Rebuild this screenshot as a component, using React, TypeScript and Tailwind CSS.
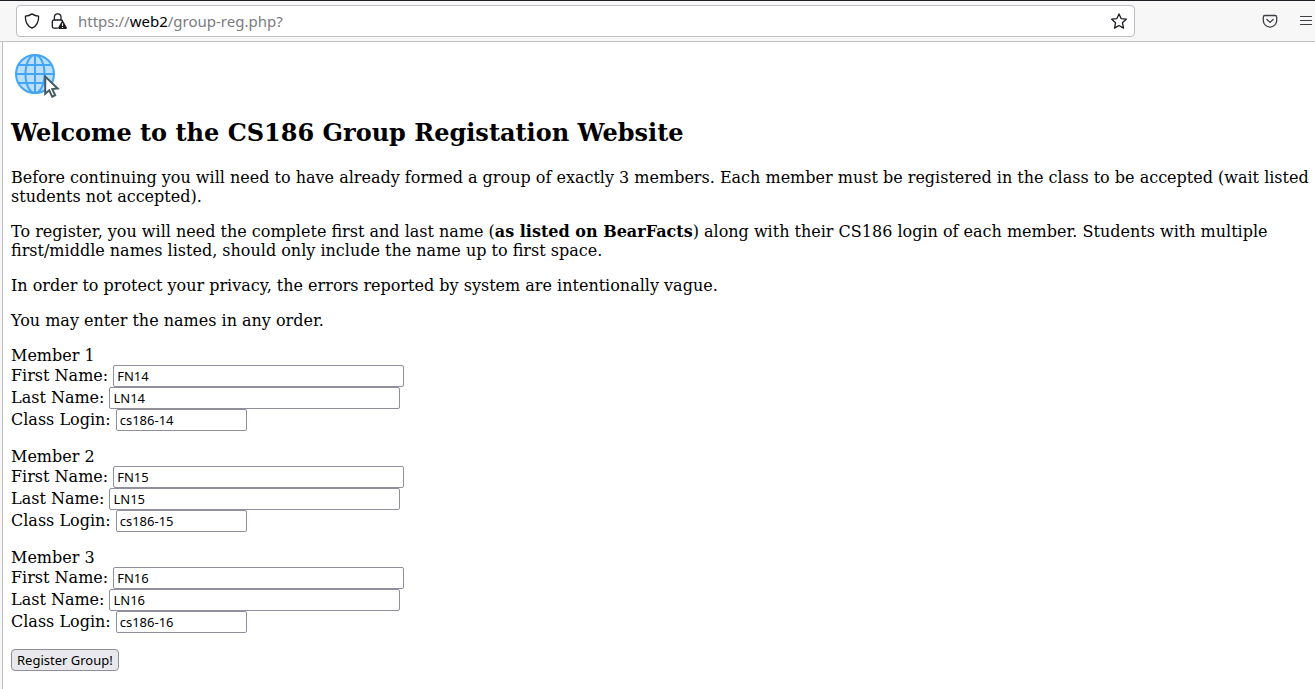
import React from "react";

type Member = { id: number; first: string; last: string; login: string };

const members: Member[] = [
  { id: 1, first: "FN14", last: "LN14", login: "cs186-14" },
  { id: 2, first: "FN15", last: "LN15", login: "cs186-15" },
  { id: 3, first: "FN16", last: "LN16", login: "cs186-16" },
];

function ShieldIcon() {
  return (
    <svg width="16" height="16" viewBox="0 0 16 16" fill="none" stroke="#1c1b22" strokeWidth="1.3" strokeLinejoin="round">
      <path d="M8 .9c2.100 1.500 4.400 2.100 6.600 2.300.2 4.900-1.600 9.600-6.600 12C3 12.800 1.200 8.100 1.400 3.200 3.600 3 5.900 2.400 8 .9z" />
    </svg>
  );
}

function LockWarningIcon() {
  return (
    <svg width="16" height="16" viewBox="0 0 16 16" fill="none">
      <path
        d="M6.500 15.200H3a1.700 1.700 0 0 1-1.700-1.700V8.700A1.700 1.700 0 0 1 3 7h7.100M3.400 7V4.200a3.300 3.300 0 0 1 6.600 0V7c.8 0 1.300.4 1.500 1"
        stroke="#1c1b22"
        strokeWidth="1.300"
        strokeLinecap="round"
      />
      <path d="M10.700 8.300a.9.900 0 0 1 1.600 0l3.500 6.300c.3.600-.1 1.300-.8 1.300H8c-.7 0-1.100-.7-.8-1.300z" fill="#1c1b22" />
      <path d="M11.500 10.200v2.700M11.500 14v1" stroke="#fff" strokeWidth="1.100" />
    </svg>
  );
}

function StarIcon() {
  return (
    <svg width="16" height="16" viewBox="0 0 16 16" fill="none" stroke="#1c1b22" strokeWidth="1.300" strokeLinejoin="round">
      <path d="M8 .9l2.100 4.700 5.200.6-3.900 3.500 1.100 5.400L8 12.500l-4.500 2.600 1.100-5.400L.7 6.200l5.200-.6z" />
    </svg>
  );
}

function PocketIcon() {
  return (
    <svg width="16" height="16" viewBox="0 0 16 16" fill="none" stroke="#3f3f45" strokeWidth="1.300" strokeLinecap="round" strokeLinejoin="round">
      <path d="M3 2.500h10a1.700 1.700 0 0 1 1.700 1.700v3.200a6.700 6.700 0 0 1-13.400 0V4.200A1.700 1.700 0 0 1 3 2.500z" />
      <path d="M4.900 6.500L8 9.400l3.100-2.900" />
    </svg>
  );
}

function MenuIcon() {
  return (
    <svg width="16" height="16" viewBox="0 0 16 16" stroke="#3f3f45" strokeWidth="1.200" strokeLinecap="round">
      <path d="M2.500 3.500h11M2.500 7.500h11M2.500 11.500h11" />
    </svg>
  );
}

function GlobeLogo() {
  return (
    <svg width="50" height="50" viewBox="0 0 50 50" fill="none" role="img" aria-label="Website">
      <circle cx="24" cy="24" r="19" fill="#bbdefb" />
      <g stroke="#42a5f5" strokeWidth="2">
        <circle cx="24" cy="24" r="19" />
        <ellipse cx="24" cy="24" rx="9.500" ry="19" />
        <path d="M24 5v38M5 24h38M8 15h32M8 33h32" />
      </g>
      <path
        d="M34.200 26.500v17.300l4-3.500 3 6.400 3-1.400-2.900-6.200 5.400-.6z"
        fill="#fff"
        stroke="#455a64"
        strokeWidth="2"
        strokeLinejoin="miter"
      />
    </svg>
  );
}

type FieldProps = { id: string; label: string; value: string; short?: boolean };

function Field({ id, label, value, short = false }: FieldProps) {
  return (
    <div className="flex h-[22px] items-center gap-[5px]">
      <label htmlFor={id} className="leading-5">
        {label}
      </label>
      <input
        id={id}
        type="text"
        defaultValue={value}
        className={`h-[22px] rounded-xs border border-[#8f8f9d] bg-white px-[3px] font-['Noto_Sans','Open_Sans',sans-serif] text-[13px] text-black ${
          short ? "w-[131px]" : "w-[291px]"
        }`}
      />
    </div>
  );
}

export default function App() {
  return (
    <div className="flex min-h-screen flex-col bg-white text-black">
      <header className="flex h-[42px] items-center border-t border-b border-t-[#201d24] border-b-[#c2c2c4] bg-[#f7f7f7] pr-px pl-4">
        <div className="flex h-8 min-w-0 flex-1 items-center rounded-sm border border-[#bfbfc2] bg-white px-[7px]">
          <button type="button" aria-label="Tracking protection">
            <ShieldIcon />
          </button>
          <button type="button" aria-label="Connection not secure" className="ml-[11px]">
            <LockWarningIcon />
          </button>
          <div className="ml-[11px] min-w-0 flex-1 truncate font-['Noto_Sans','Open_Sans',sans-serif] text-[15px] leading-5 text-[#7b7b7f]">
            https://<span className="text-black">web2</span>/group-reg.php?
          </div>
          <button type="button" aria-label="Bookmark this page">
            <StarIcon />
          </button>
        </div>
        <div className="flex w-[179px] shrink-0 items-center justify-end gap-5">
          <button type="button" aria-label="Save to Pocket">
            <PocketIcon />
          </button>
          <button type="button" aria-label="Open application menu">
            <MenuIcon />
          </button>
        </div>
      </header>

      <div className="flex flex-1 bg-[#f7f7f7] pl-[2px]">
        <main className="min-w-0 flex-1 border-l border-[#bfbfc2] bg-white py-2 pl-2 font-['DejaVu_Serif',serif] text-[16px] leading-[19px]">
          <GlobeLogo />
          <h1 className="mt-[19px] text-[24px] leading-7 font-bold">Welcome to the CS186 Group Registation Website</h1>
          <div className="mt-[21px] flex flex-col gap-4">
            <p>
              Before continuing you will need to have already formed a group of exactly 3 members. Each member must be
              registered in the class to be accepted (wait listed students not accepted).
            </p>
            <p>
              To register, you will need the complete first and last name (<b>as listed on BearFacts</b>) along with
              their CS186 login of each member. Students with multiple first/middle names listed, should only include
              the name up to first space.
            </p>
            <p>In order to protect your privacy, the errors reported by system are intentionally vague.</p>
            <p>You may enter the names in any order.</p>
          </div>
          <form className="mt-4 flex flex-col items-start gap-4" onSubmit={(e) => e.preventDefault()}>
            {members.map((m) => (
              <fieldset key={m.id}>
                <legend>Member {m.id}</legend>
                <Field id={`first-${m.id}`} label="First Name:" value={m.first} />
                <Field id={`last-${m.id}`} label="Last Name:" value={m.last} />
                <Field id={`login-${m.id}`} label="Class Login:" value={m.login} short />
              </fieldset>
            ))}
            <button
              type="submit"
              className="flex h-[22px] items-center rounded-sm border border-[#8f8f9d] bg-[#e9e9ed] px-[5px] font-['Noto_Sans','Open_Sans',sans-serif] text-[13px]"
            >
              Register Group!
            </button>
          </form>
        </main>
      </div>
    </div>
  );
}
